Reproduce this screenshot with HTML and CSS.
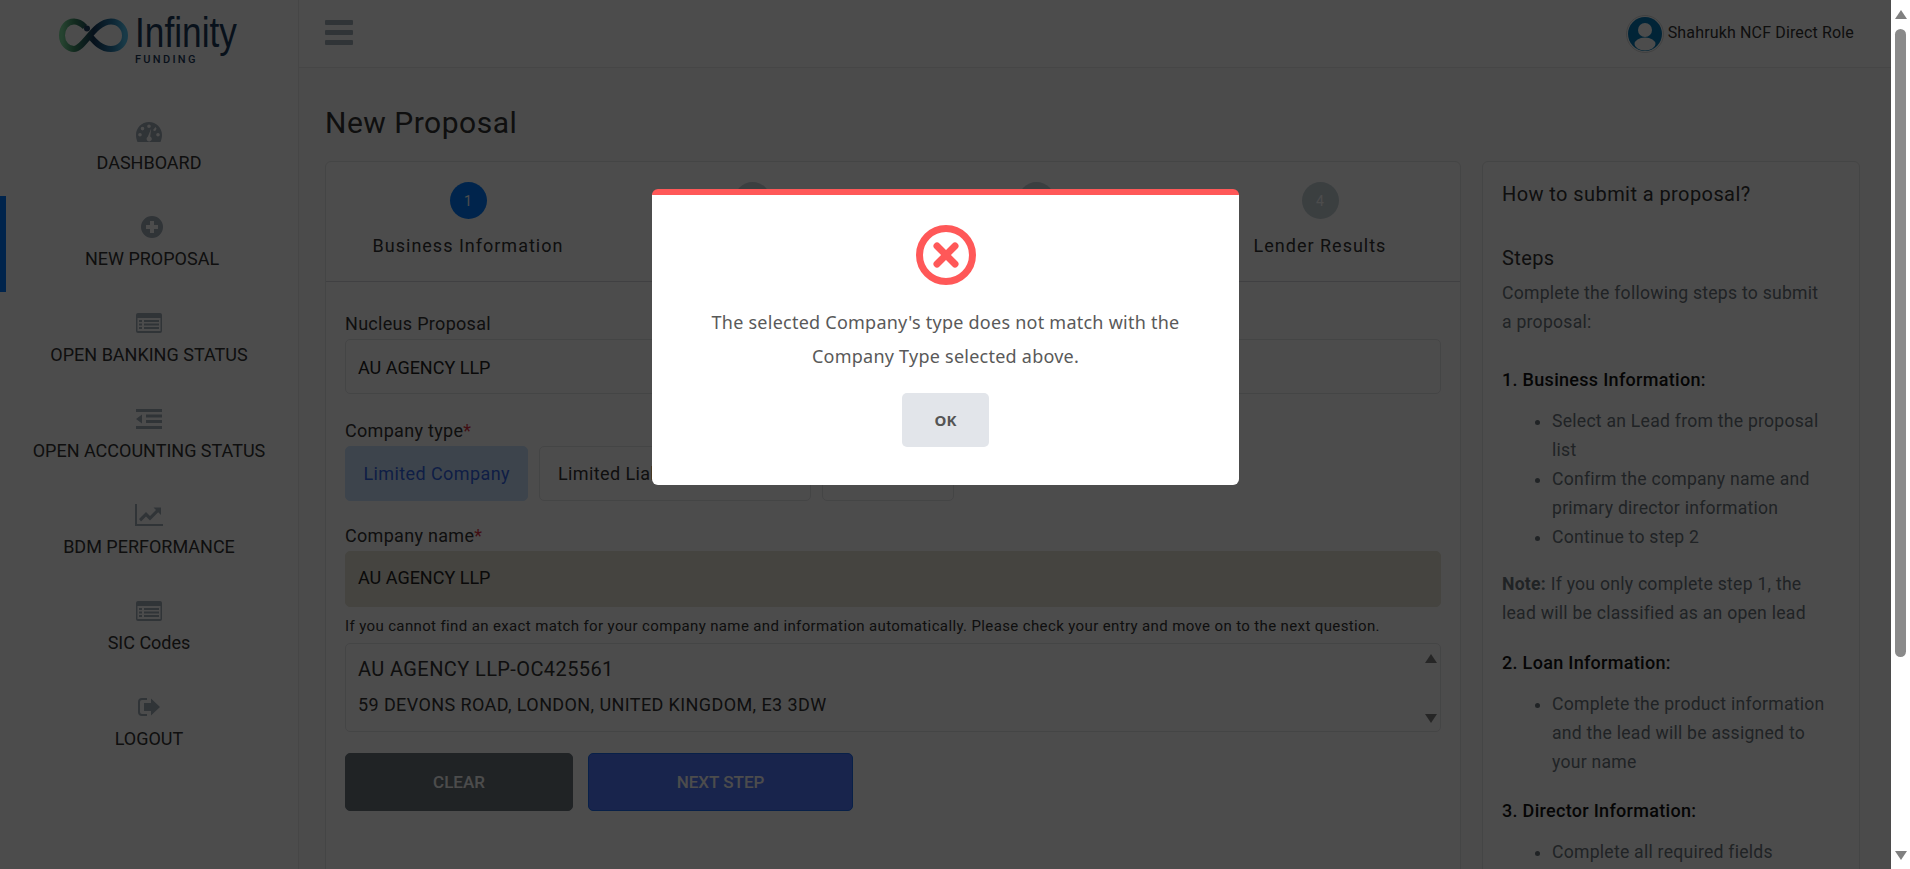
FILE: index.html
```html
<!DOCTYPE html>
<html lang="en">
<head>
    <meta charset="UTF-8">
    <meta name="viewport" content="width=device-width, initial-scale=1.0">
    <title>New Proposal</title>
    <link rel="stylesheet" href="styles.css">
</head>
<body>
    <div class="page">
        <aside class="sidebar">
            <div class="logo">
                <svg class="logo-mark" viewBox="0 0 70 36" width="70" height="36">
                    <defs>
                        <linearGradient id="logo-grad" x1="0" x2="1" y1="0" y2="0">
                            <stop offset="0" stop-color="#7fe0a0"/>
                            <stop offset="0.2" stop-color="#3f8f68"/>
                            <stop offset="0.5" stop-color="#163a5c"/>
                            <stop offset="0.8" stop-color="#2a7fb0"/>
                            <stop offset="1" stop-color="#55c4f0"/>
                        </linearGradient>
                    </defs>
                    <path d="M26 9C22 5 18 3.500 15 3.500 8 3.500 3 9.500 3 17.500 3 25.500 9 31 15 31 25 31 35 3.500 52 3.500 60 3.500 66 10 66 17.500 66 25.500 60 31 52 31 42 31 36 24 31 18" fill="none" stroke="url(#logo-grad)" stroke-width="6"/>
                    <circle cx="28" cy="10.500" r="3" fill="#214264"/>
                </svg>
                <div class="logo-text">
                    <span class="logo-name">Infinity</span>
                    <span class="logo-sub">FUNDING</span>
                </div>
            </div>
            <nav class="nav">
                <a class="nav-item" href="#">
                    <svg class="nav-icon" viewBox="0 0 26 20" width="26" height="20"><path fill-rule="evenodd" d="M13 0C5.800 0 0 5.800 0 13c0 2.600.7 5 1.500 7h23c.8-2 1.500-4.400 1.500-7C26 5.800 20.200 0 13 0zM13 2.500a1.800 1.800 0 1 1 0 3.600 1.800 1.800 0 0 1 0-3.600zM6.500 4.800a1.800 1.800 0 1 1 0 3.600 1.800 1.800 0 0 1 0-3.600zM4 11a1.800 1.800 0 1 1 0 3.600A1.800 1.800 0 0 1 4 11zM22 11a1.800 1.800 0 1 1 0 3.600 1.800 1.800 0 0 1 0-3.600zM19.500 5l1 1.400-.6 1.800a1.800 1.800 0 0 1-2.800-.1zM15.200 6.600l-1 7.900a2.600 2.600 0 1 1-2.400.2z"/></svg>
                    <span>DASHBOARD</span>
                </a>
                <a class="nav-item active" href="#">
                    <svg class="nav-icon" viewBox="0 0 22 22" width="22" height="22"><path fill-rule="evenodd" d="M11 0a11 11 0 1 0 0 22 11 11 0 0 0 0-22zM9 5h4v4h4v4h-4v4H9v-4H5V9h4z"/></svg>
                    <span>NEW PROPOSAL</span>
                </a>
                <a class="nav-item" href="#">
                    <svg class="nav-icon" viewBox="0 0 26 20" width="26" height="20"><path fill-rule="evenodd" d="M2 0h22a2 2 0 0 1 2 2v16a2 2 0 0 1-2 2H2a2 2 0 0 1-2-2V2a2 2 0 0 1 2-2zM1.500 5v13h23V5zM3 7h3v2H3zM8 7h15v2H8zM3 10.500h3v2H3zM8 10.500h15v2H8zM3 14h3v2H3zM8 14h15v2H8z"/></svg>
                    <span>OPEN BANKING STATUS</span>
                </a>
                <a class="nav-item" href="#">
                    <svg class="nav-icon" viewBox="0 0 26 20" width="26" height="20"><path d="M0 0h26v3H0zM10 5.500h16v3H10zM10 11h16v3H10zM0 17h26v3H0zM0 10l6-4.500v9z"/></svg>
                    <span>OPEN ACCOUNTING STATUS</span>
                </a>
                <a class="nav-item" href="#">
                    <svg class="nav-icon" viewBox="0 0 28 22" width="28" height="22"><path d="M0 0h2v20h26v2H0zM4 15l7-7 4 4 6-6-2.500-2.500H26V11l-2.800-2.800L15 16.500l-4-4-5 5z"/></svg>
                    <span>BDM PERFORMANCE</span>
                </a>
                <a class="nav-item" href="#">
                    <svg class="nav-icon" viewBox="0 0 26 20" width="26" height="20"><path fill-rule="evenodd" d="M2 0h22a2 2 0 0 1 2 2v16a2 2 0 0 1-2 2H2a2 2 0 0 1-2-2V2a2 2 0 0 1 2-2zM1.500 5v13h23V5zM3 7h3v2H3zM8 7h15v2H8zM3 10.500h3v2H3zM8 10.500h15v2H8zM3 14h3v2H3zM8 14h15v2H8z"/></svg>
                    <span>SIC Codes</span>
                </a>
                <a class="nav-item" href="#">
                    <svg class="nav-icon" viewBox="0 0 22 18" width="22" height="18"><path d="M22 9l-9-8.500V5H6v8h7v4.500zM4 0h5v2H4a2 2 0 0 0-2 2v10a2 2 0 0 0 2 2h5v2H4a4 4 0 0 1-4-4V4a4 4 0 0 1 4-4z"/></svg>
                    <span>LOGOUT</span>
                </a>
            </nav>
        </aside>

        <div class="content">
            <header class="topbar">
                <div class="hamburger"><i></i><i></i><i></i></div>
                <div class="user">
                    <svg class="avatar" viewBox="0 0 38 38" width="38" height="38">
                        <circle cx="19" cy="19" r="18.500" fill="#fff" stroke="#d8d8d8"/>
                        <circle cx="19" cy="19" r="17" fill="#067ab8"/>
                        <circle cx="19" cy="15" r="7" fill="#fff"/>
                        <ellipse cx="19" cy="29" rx="10.500" ry="6.500" fill="#fff"/>
                    </svg>
                    <span class="user-name">Shahrukh NCF Direct Role</span>
                </div>
            </header>

            <main class="main">
                <h1 class="page-title">New Proposal</h1>
                <div class="columns">
                    <section class="card form-card">
                        <div class="steps">
                            <div class="step current"><span class="step-num">1</span><span class="step-label">Business Information</span></div>
                            <div class="step"><span class="step-num">2</span><span class="step-label">Loan Information</span></div>
                            <div class="step"><span class="step-num">3</span><span class="step-label">Director Information</span></div>
                            <div class="step"><span class="step-num">4</span><span class="step-label">Lender Results</span></div>
                        </div>
                        <form class="form">
                            <label class="field-label">Nucleus Proposal</label>
                            <div class="input">AU AGENCY LLP</div>

                            <label class="field-label type-label">Company type<span class="req">*</span></label>
                            <div class="type-row">
                                <button type="button" class="type-btn selected">Limited Company</button>
                                <button type="button" class="type-btn">Limited Liability Partnership</button>
                                <button type="button" class="type-btn">Sole Trader</button>
                            </div>

                            <label class="field-label name-label">Company name<span class="req">*</span></label>
                            <div class="input readonly">AU AGENCY LLP</div>
                            <p class="help">If you cannot find an exact match for your company name and information automatically. Please check your entry and move on to the next question.</p>

                            <div class="result-box">
                                <div class="result-name">AU AGENCY LLP-OC425561</div>
                                <div class="result-address">59 DEVONS ROAD, LONDON, UNITED KINGDOM, E3 3DW</div>
                                <div class="box-arrows"><i class="arrow-up"></i><i class="arrow-down"></i></div>
                            </div>

                            <div class="actions">
                                <button type="button" class="btn btn-clear">CLEAR</button>
                                <button type="button" class="btn btn-next">NEXT STEP</button>
                            </div>
                        </form>
                    </section>

                    <section class="card help-card">
                        <h2 class="help-title">How to submit a proposal?</h2>
                        <h3 class="help-steps">Steps</h3>
                        <p class="intro">Complete the following steps to submit<br>a proposal:</p>
                        <h4>1. Business Information:</h4>
                        <ul>
                            <li>Select an Lead from the proposal list</li>
                            <li>Confirm the company name and primary director information</li>
                            <li>Continue to step 2</li>
                        </ul>
                        <p class="note"><b>Note:</b> If you only complete step 1, the lead will be classified as an open lead</p>
                        <h4>2. Loan Information:</h4>
                        <ul>
                            <li>Complete the product information and the lead will be assigned to your name</li>
                        </ul>
                        <h4>3. Director Information:</h4>
                        <ul>
                            <li>Complete all required fields</li>
                        </ul>
                    </section>
                </div>
            </main>
        </div>

        <!-- sweet alert -->
        <div class="overlay">
            <div class="modal">
                <svg class="modal-icon" viewBox="0 0 60 60" width="60" height="60">
                    <circle cx="30" cy="30" r="26.500" fill="none" stroke="#ff5858" stroke-width="7"/>
                    <path d="M21 21l18 18M39 21L21 39" fill="none" stroke="#ff5858" stroke-width="7" stroke-linecap="round"/>
                </svg>
                <p class="modal-text">The selected Company's type does not match with the Company Type selected above.</p>
                <button type="button" class="modal-ok">OK</button>
            </div>
        </div>
    </div>

    <div class="scrollbar">
        <i class="arrow-up"></i>
        <div class="thumb-track"><div class="thumb"></div></div>
        <i class="arrow-down"></i>
    </div>
</body>
</html>
```

FILE: styles.css
```css
* {
    box-sizing: border-box;
}

html, body {
    height: 100%;
}

body {
    margin: 0;
    display: flex;
    height: 869px;
    overflow: hidden;
    font-family: Roboto, Arial, sans-serif;
    font-size: 18px;
    color: #212529;
    background: #fff;
}

.page {
    position: relative;
    flex: 1;
    display: flex;
    min-width: 0;
    overflow: hidden;
}

/* sidebar */
.sidebar {
    width: 299px;
    flex-shrink: 0;
    border-right: 1px solid #ececec;
    background: #fff;
}

.logo {
    height: 101px;
    display: flex;
    gap: 6px;
    padding: 13px 0 0 59px;
}

.logo-mark {
    margin-top: 4.500px;
    flex-shrink: 0;
}

.logo-text {
    display: flex;
    flex-direction: column;
    width: 102px;
}

.logo-name {
    font-family: "Liberation Sans", sans-serif;
    font-size: 42px;
    line-height: 40px;
    color: #1c3b5c;
    transform: scaleX(0.84);
    transform-origin: left center;
}

.logo-sub {
    margin-top: 1px;
    font-size: 11px;
    font-weight: 500;
    line-height: 12px;
    letter-spacing: 2.3px;
    color: #1c3b5c;
}

.nav-item {
    height: 96px;
    display: flex;
    flex-direction: column;
    align-items: center;
    padding-top: 20px;
    line-height: 22px;
    color: #333;
    text-decoration: none;
}

.nav-item:first-child {
    height: 95px;
}

.nav-item.active {
    border-left: 6px solid #007bff;
}

.nav-icon {
    height: 22px;
    fill: #a0adb9;
    margin-bottom: 10px;
}

.nav-item:first-child .nav-icon {
    margin-bottom: 9px;
}

/* top bar */
.content {
    flex: 1;
    min-width: 0;
    display: flex;
    flex-direction: column;
    background: #fbfcfc;
}

.topbar {
    height: 68px;
    flex-shrink: 0;
    display: flex;
    align-items: center;
    justify-content: space-between;
    padding: 0 37px 0 26px;
    background: #fff;
    border-bottom: 1px solid #ececec;
}

.hamburger {
    width: 28px;
    margin-top: -2px;
    display: flex;
    flex-direction: column;
    gap: 5px;
}

.hamburger i {
    height: 5px;
    border-radius: 1px;
    background: #a0adb9;
}

.user {
    display: flex;
    align-items: center;
    gap: 4px;
}

.user-name {
    margin-top: -2px;
    font-size: 16px;
    letter-spacing: 0.15px;
    color: #333;
}

/* main */
.main {
    padding: 0 31px 0 26px;
}

.page-title {
    margin: 0;
    height: 93px;
    padding-top: 37px;
    font-size: 30px;
    font-weight: 400;
    line-height: 36px;
    letter-spacing: 0.5px;
    color: #333;
}

.columns {
    display: flex;
    gap: 21px;
    align-items: flex-start;
}

.card {
    background: #fff;
    border: 1px solid #e3e6e6;
    border-radius: 6px;
    height: 900px;
}

.form-card {
    flex: 1;
    min-width: 0;
}

.help-card {
    width: 378px;
    flex-shrink: 0;
    padding: 18px 19px;
    font-size: 17.600px;
    line-height: 29px;
    letter-spacing: 0.25px;
    color: #6c757d;
}

/* steps */
.steps {
    display: grid;
    grid-template-columns: repeat(4, 284px);
    height: 120px;
    border-bottom: 1px solid #d5d8dc;
    overflow: hidden;
}

.step {
    display: flex;
    flex-direction: column;
    align-items: center;
    padding-top: 20px;
}

.step-num {
    width: 37px;
    height: 37px;
    border-radius: 50%;
    display: flex;
    align-items: center;
    justify-content: center;
    font-size: 14px;
    color: #fff;
    background: #c6d2d8;
}

.step.current .step-num {
    background: #007bff;
}

.step-label {
    margin-top: 15px;
    font-size: 18px;
    line-height: 24px;
    letter-spacing: 1px;
    color: #333;
}

/* form */
.form {
    padding: 29px 19px 0;
}

.field-label {
    display: block;
    font-size: 18px;
    line-height: 26px;
    letter-spacing: 0.3px;
    color: #333;
}

.type-label {
    margin-top: 24px;
}

.name-label {
    margin-top: 22px;
}

.req {
    color: #dc3545;
}

.input {
    height: 55px;
    margin-top: 2px;
    padding: 1px 12px 0;
    display: flex;
    align-items: center;
    border: 1px solid #e4e6e8;
    border-radius: 5px;
    color: #222;
}

.input.readonly {
    height: 56px;
    margin-top: 2px;
    padding: 0 12px 3px;
    background: #e6e3d5;
    border-color: #e6e3d5;
}

.type-row {
    display: flex;
    gap: 11px;
    margin-top: 2px;
}

.type-btn {
    height: 55px;
    padding: 0 17.500px;
    font-family: inherit;
    font-size: 18px;
    letter-spacing: 0.4px;
    color: #333;
    background: #fff;
    border: 1px solid #e4e6e8;
    border-radius: 5px;
}

.type-btn.selected {
    color: #3566e8;
    background: #cce5ff;
    border-color: #cce5ff;
}

.help {
    margin: 9px 0 7px;
    font-size: 15px;
    line-height: 20px;
    letter-spacing: 0.37px;
    color: #333;
}

.result-box {
    position: relative;
    height: 89px;
    padding: 12px;
    border: 1px solid #e4e6e8;
    border-radius: 5px;
}

.result-name {
    font-size: 20px;
    line-height: 26px;
    letter-spacing: 0.4px;
    color: #333;
}

.result-address {
    margin-top: 10px;
    font-size: 18px;
    line-height: 26px;
    letter-spacing: 0.4px;
    color: #333;
}

.box-arrows {
    position: absolute;
    top: 10px;
    right: 3px;
    bottom: 8px;
    display: flex;
    flex-direction: column;
    justify-content: space-between;
}

.arrow-up,
.arrow-down {
    display: block;
    width: 0;
    height: 0;
    border-left: 6.500px solid transparent;
    border-right: 6.500px solid transparent;
}

.arrow-up {
    border-bottom: 9px solid #808080;
}

.arrow-down {
    border-top: 9px solid #808080;
}

.actions {
    display: flex;
    gap: 15px;
    margin-top: 21px;
}

.btn {
    height: 58px;
    font-family: inherit;
    font-size: 17px;
    font-weight: 500;
    color: #fff;
    border-radius: 5px;
}

.btn-clear {
    width: 228px;
    background: #6c757d;
    border: 1px solid #6c757d;
}

.btn-next {
    width: 265px;
    background: #5078ff;
    border: 1px solid #1c6df0;
}

/* help column */
.help-title {
    margin: 0;
    font-size: 20px;
    font-weight: 400;
    line-height: 28px;
    letter-spacing: 0.42px;
    color: #333;
}

.help-steps {
    margin: 36px 0 0;
    font-size: 20px;
    font-weight: 400;
    line-height: 28px;
    letter-spacing: 0.4px;
    color: #333;
}

.help-card p {
    margin: 0;
}

.help-card .intro {
    margin: 7px 0 28px;
}

.help-card .note {
    margin-top: 18px;
    max-width: 325px;
}

.help-card h4 {
    margin: 20px 0 0;
    font-size: 18px;
    font-weight: 500;
    line-height: 29px;
    letter-spacing: 0.3px;
    color: #111;
}

.help-card ul {
    margin: 13px 0 0;
    padding: 0 4px 0 50px;
}

.help-card ul + h4 {
    margin-top: 19px;
}

.help-card b {
    font-weight: 700;
}

/* alert */
.overlay {
    position: absolute;
    inset: 0;
    display: flex;
    justify-content: center;
    align-items: flex-start;
    padding-top: 189px;
    background: rgba(0, 0, 0, 0.7);
}

.modal {
    width: 587px;
    height: 296px;
    display: flex;
    flex-direction: column;
    align-items: center;
    padding-top: 30px;
    background: #fff;
    border-top: 6px solid #ff5858;
    border-radius: 6px;
}

.modal-text {
    width: 490px;
    margin: 20px 0 0;
    font-family: "Noto Sans", "Open Sans", sans-serif;
    font-size: 18px;
    line-height: 34px;
    letter-spacing: 0.24px;
    text-align: center;
    color: #595959;
}

.modal-ok {
    width: 87px;
    height: 54px;
    margin-top: 20px;
    font-family: "Noto Sans", sans-serif;
    font-size: 15px;
    font-weight: 700;
    color: #555;
    background: #e2e5ea;
    border: none;
    border-radius: 5px;
}

/* page scrollbar */
.scrollbar {
    width: 19px;
    flex-shrink: 0;
    display: flex;
    flex-direction: column;
    align-items: center;
    padding: 10px 0 9px;
    background: #fff;
}

.thumb-track {
    flex: 1;
    padding-top: 10px;
}

.thumb {
    height: 628px;
    width: 11px;
    border-radius: 6px;
    background: #8a8a8a;
}
```
